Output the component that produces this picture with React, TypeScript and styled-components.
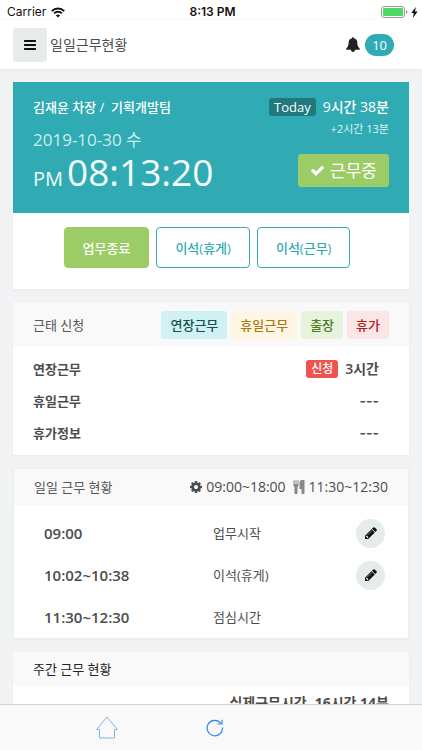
import React from "react";
import styled, { createGlobalStyle } from "styled-components";

const teal = "#30abb3";
const green = "#9ccc65";

const GlobalStyle = createGlobalStyle`
  *, *::before, *::after { box-sizing: border-box; }
  body {
    margin: 0;
    background: #f1f3f5;
    color: #4d4d4d;
    font-family: "Open Sans", "Noto Sans CJK KR", sans-serif;
    font-size: 13px;
    line-height: 20px;
  }
  button { font: inherit; cursor: pointer; margin: 0; }
  h1, h2, p, dl, dd, dt { margin: 0; font-size: inherit; font-weight: inherit; }
`;

const Screen = styled.div`
  display: flex;
  flex-direction: column;
  height: 100vh;
`;

const StatusBar = styled.div`
  display: grid;
  grid-template-columns: 1fr auto 1fr;
  align-items: center;
  flex: none;
  height: 20px;
  padding: 2px 4px 0 7px;
  background: #fff;
  color: #111;
  font-family: Inter, "Liberation Sans", sans-serif;
  font-size: 12px;
`;

const StatusGroup = styled.div<{ $end?: boolean }>`
  display: flex;
  align-items: center;
  justify-content: ${(p) => (p.$end ? "flex-end" : "flex-start")};
  gap: ${(p) => (p.$end ? 3 : 5)}px;
`;

const Clock = styled.span`
  font-weight: 600;
`;

const Header = styled.header`
  display: flex;
  align-items: center;
  flex: none;
  height: 49px;
  padding: 0 28px 0 13px;
  background: #fff;
  box-shadow: 0 1px 4px #e6e8eb;
`;

const MenuButton = styled.button`
  display: grid;
  place-items: center;
  width: 34px;
  height: 34px;
  padding: 0;
  border: 0;
  border-radius: 3px;
  background: #e6ebeb;
  color: #111;
`;

const Title = styled.h1`
  flex: 1;
  padding-left: 3px;
  font-size: 14px;
`;

const Alerts = styled.button`
  display: flex;
  align-items: center;
  gap: 4px;
  padding: 0;
  border: 0;
  background: none;
  color: #222;
`;

const Count = styled.span`
  padding: 0 7px;
  border-radius: 11px;
  background: ${teal};
  color: #fff;
  line-height: 22px;
`;

const Main = styled.main`
  display: flex;
  flex-direction: column;
  gap: 13px;
  flex: 1;
  min-height: 0;
  overflow-y: auto;
  scrollbar-width: none;
  padding: 13px;
`;

const Card = styled.section<{ $outlined?: boolean }>`
  flex: none;
  background: #fff;
  border: ${(p) => (p.$outlined ? "1px solid #eceef0" : "0")};
  box-shadow: 0 1px 2px #e9ebee;
`;

const CardHead = styled.div<{ $height: number }>`
  display: flex;
  align-items: center;
  justify-content: space-between;
  height: ${(p) => p.$height}px;
  padding: 0 20px;
  background: #f9f9f9;
`;

const CardTitle = styled.h2<{ $dark?: boolean }>`
  color: ${(p) => (p.$dark ? "#222" : "#555")};
`;

const Hero = styled.div`
  display: flex;
  justify-content: space-between;
  padding: 15px 20px 21px;
  background: ${teal};
  color: #fff;
`;

const HeroLeft = styled.div`
  display: flex;
  flex-direction: column;
`;

const HeroRight = styled.div`
  display: flex;
  flex-direction: column;
  align-items: flex-end;
`;

const Person = styled.p`
  font-weight: 500;
  white-space: pre;
`;

const DateLine = styled.p`
  margin-top: 11px;
  color: #c8eeef;
  font-size: 17px;
  line-height: 24px;
`;

const TimeLine = styled.p`
  display: flex;
  align-items: baseline;
  gap: 4px;
  color: #f3fcfc;
  font-size: 37px;
  line-height: 40px;
`;

const Meridiem = styled.span`
  font-size: 20px;
  line-height: 20px;
`;

const TodayLine = styled.p`
  display: flex;
  align-items: center;
  gap: 7px;
  font-size: 14px;
  font-weight: 500;
`;

const Badge = styled.span<{ $alert?: boolean }>`
  padding: 0 5px;
  border-radius: 3px;
  background: ${(p) => (p.$alert ? "#ef5350" : "#21787d")};
  color: #fff;
  font-size: ${(p) => (p.$alert ? 12 : 13)}px;
  font-weight: 500;
  line-height: 18px;
`;

const Extra = styled.p`
  margin-top: 2px;
  color: #dff5f5;
  font-size: 11px;
`;

const Working = styled.button`
  display: flex;
  align-items: center;
  gap: 5px;
  height: 33px;
  margin-top: 15px;
  padding: 0 12px;
  border: 0;
  border-radius: 3px;
  background: ${green};
  color: #fff;
  font-size: 17px;
`;

const Actions = styled.div`
  display: flex;
  justify-content: center;
  gap: 7px;
  padding: 14px 16px 21px 8px;
`;

const ActionButton = styled.button<{ $filled?: boolean }>`
  height: 41px;
  padding: 0 18px;
  border: 1px solid ${(p) => (p.$filled ? green : teal)};
  border-radius: 4px;
  background: ${(p) => (p.$filled ? green : "#fff")};
  color: ${(p) => (p.$filled ? "#fff" : teal)};
  font-weight: 500;
`;

const Tags = styled.div`
  display: flex;
  gap: 4px;
`;

const Tag = styled.button<{ $bg: string; $fg: string }>`
  height: 28px;
  padding: 0 9px;
  border: 0;
  border-radius: 3px;
  background: ${(p) => p.$bg};
  color: ${(p) => p.$fg};
  font-weight: 500;
`;

const Requests = styled.dl`
  display: flex;
  flex-direction: column;
  gap: 12px;
  padding: 12px 30px 12px 20px;
`;

const RequestRow = styled.div`
  display: flex;
  align-items: center;
  justify-content: space-between;
  font-weight: 700;
`;

const RequestValue = styled.dd`
  display: flex;
  align-items: center;
  gap: 7px;
  font-size: 14px;
  font-weight: 600;
`;

const Blank = styled.span`
  font-family: Inter, sans-serif;
`;

const Hours = styled.div`
  display: flex;
  align-items: center;
  gap: 6px;
  font-size: 14px;
`;

const HoursItem = styled.span`
  display: flex;
  align-items: center;
  gap: 3px;
`;

const LogTable = styled.table`
  width: 100%;
  margin-top: 7px;
  border-collapse: collapse;

  th, td { height: 42px; padding: 0; text-align: left; }
  th { width: 50%; padding-left: 30px; font-size: 15px; font-weight: 600; }
  td:nth-child(2) { padding-left: 2px; }
  td:last-child { width: 52px; }
`;

const EditButton = styled.button`
  display: grid;
  place-items: center;
  width: 29px;
  height: 29px;
  padding: 0;
  border: 0;
  border-radius: 50%;
  background: #e6ebeb;
  color: #111;
`;

const WeekTotal = styled.p`
  display: flex;
  justify-content: flex-end;
  gap: 8px;
  padding: 7px 20px;
  font-size: 14px;
  font-weight: 700;
`;

const TabBar = styled.nav`
  display: flex;
  justify-content: center;
  align-items: center;
  gap: 88px;
  flex: none;
  height: 46px;
  padding-right: 102px;
  border-top: 1px solid #d4d5d7;
  background: #f9f9f9;
`;

const TabButton = styled.button`
  display: grid;
  padding: 0;
  border: 0;
  background: none;
`;

const glyphs = {
  bars: "M1664 1344v128q0 26-19 45t-45 19h-1408q-26 0-45-19t-19-45v-128q0-26 19-45t45-19h1408q26 0 45 19t19 45zm0-512v128q0 26-19 45t-45 19h-1408q-26 0-45-19t-19-45v-128q0-26 19-45t45-19h1408q26 0 45 19t19 45zm0-512v128q0 26-19 45t-45 19h-1408q-26 0-45-19t-19-45v-128q0-26 19-45t45-19h1408q26 0 45 19t19 45z",
  bell: "M1664 1408q0 52-38 90t-90 38h-448q0 106-75 181t-181 75-181-75-75-181h-448q-52 0-90-38t-38-90q50-42 91-88t85-119.5 74.5-158.5 50-206 19.5-260q0-152 117-282.5t307-158.5q-8-19-8-39 0-40 28-68t68-28 68 28 28 68q0 20-8 39 190 28 307 158.5t117 282.5q0 139 19.5 260t50 206 74.5 158.5 85 119.5 91 88z",
  check: "M1671 566q0 40-28 68l-724 724-136 136q-28 28-68 28t-68-28l-136-136-362-362q-28-28-28-68t28-68l136-136q28-28 68-28t68 28l294 295 656-657q28-28 68-28t68 28l136 136q28 28 28 68z",
  cog: "M1152 896q0-106-75-181t-181-75-181 75-75 181 75 181 181 75 181-75 75-181zm512-109v222q0 12-8 23t-20 13l-185 28q-19 54-39 91 35 50 107 138 10 12 10 25t-9 23q-27 37-99 108t-94 71q-12 0-26-9l-138-108q-44 23-91 38-16 136-29 186-7 28-36 28h-222q-14 0-24.5-8.5t-11.5-21.5l-28-184q-49-16-90-37l-141 107q-10 9-25 9-14 0-25-11-126-114-165-168-7-10-7-23 0-12 8-23 15-21 51-66.5t54-70.5q-27-50-41-99l-183-27q-13-2-21-12.5t-8-23.5v-222q0-12 8-23t19-13l186-28q14-46 39-92-40-57-107-138-10-12-10-24 0-10 9-23 26-36 98.5-107.5t94.5-71.5q13 0 26 10l138 107q44-23 91-38 16-136 29-186 7-28 36-28h222q14 0 24.5 8.5t11.5 21.5l28 184q49 16 90 37l142-107q9-9 24-9 13 0 25 10 129 119 165 170 7 8 7 22 0 12-8 23-15 21-51 66.5t-54 70.5q26 50 41 98l183 28q13 2 21 12.5t8 23.5z",
  cutlery: "M832 64v640q0 61-35.5 111t-92.5 70v779q0 52-38 90t-90 38h-128q-52 0-90-38t-38-90v-779q-57-20-92.5-70t-35.5-111v-640q0-26 19-45t45-19 45 19 19 45v416q0 26 19 45t45 19 45-19 19-45v-416q0-26 19-45t45-19 45 19 19 45v416q0 26 19 45t45 19 45-19 19-45v-416q0-26 19-45t45-19 45 19 19 45zm768 0v1600q0 52-38 90t-90 38h-128q-52 0-90-38t-38-90v-512h-224q-13 0-22.5-9.5t-9.5-22.5v-800q0-132 94-226t226-94h256q26 0 45 19t19 45z",
  pencil: "M491 1536l91-91-235-235-91 91v107h128v128h107zm523-928q0-22-22-22-10 0-17 7l-542 542q-7 7-7 17 0 22 22 22 10 0 17-7l542-542q7-7 7-17zm-54-192l416 416-832 832h-416v-416zm683 96q0 53-37 90l-166 166-416-416 166-165q36-38 90-38 53 0 91 38l235 234q37 39 37 91z",
};

function Glyph({ name, size, color = "currentColor" }: { name: keyof typeof glyphs; size: number; color?: string }) {
  return (
    <svg width={size} height={size} viewBox="0 0 1792 1792" fill={color} aria-hidden="true">
      <path d={glyphs[name]} />
    </svg>
  );
}

const WifiIcon = () => (
  <svg width="14" height="11" viewBox="0 0 14 11" fill="none" stroke="#111" strokeWidth="2" aria-label="Wi-Fi">
    <path d="M.8 4.1a8.8 8.8 0 0 1 12.4 0M3.1 6.4a5.5 5.5 0 0 1 7.8 0" />
    <path d="M7 10.6 4.9 8.5a3 3 0 0 1 4.2 0Z" fill="#111" stroke="none" />
  </svg>
);

const BatteryIcon = () => (
  <svg width="27" height="12" viewBox="0 0 27 12" aria-label="Battery">
    <rect x=".5" y=".5" width="23" height="11" rx="2.5" fill="#fff" stroke="#999" />
    <rect x="2" y="2" width="20" height="8" rx="1" fill="#4cd964" />
    <path d="M25 4v4q1.5-.6 1.5-2t-1.5-2Z" fill="#999" />
  </svg>
);

const BoltIcon = () => (
  <svg width="7" height="11" viewBox="0 0 7 11" aria-label="Charging">
    <path d="M4.8 0 .3 6h2.5L1.8 11 6.7 4.5H4Z" fill="#111" />
  </svg>
);

const HomeIcon = () => (
  <svg width="22" height="23" viewBox="0 0 22 23" fill="none" stroke="#7db4ee" aria-hidden="true">
    <path d="M11 1 .7 13.5H3.5v8.5h15v-8.5h2.8Z" />
  </svg>
);

const ReloadIcon = () => (
  <svg width="18" height="18" viewBox="0 0 18 18" fill="none" stroke="#2f86ea" strokeWidth="1.2" aria-hidden="true">
    <path d="M16.5 8.5A7.7 7.7 0 1 1 14.8 4.2" />
    <path d="M11.5 5H16V.8" />
  </svg>
);

const tags = [
  { label: "연장근무", bg: "#d1f2f3", fg: "#174f52" },
  { label: "휴일근무", bg: "#fff7e3", fg: "#a87b16" },
  { label: "출장", bg: "#e7f3dc", fg: "#4f7a28" },
  { label: "휴가", bg: "#fbe5e6", fg: "#b01c1c" },
];

const requests = [
  { label: "연장근무", value: "3시간" },
  { label: "휴일근무" },
  { label: "휴가정보" },
];

const log = [
  { time: "09:00", label: "업무시작", editable: true },
  { time: "10:02~10:38", label: "이석(휴게)", editable: true },
  { time: "11:30~12:30", label: "점심시간", editable: false },
];

export default function App() {
  return (
    <Screen>
      <GlobalStyle />
      <StatusBar>
        <StatusGroup>Carrier<WifiIcon /></StatusGroup>
        <Clock>8:13 PM</Clock>
        <StatusGroup $end><BatteryIcon /><BoltIcon /></StatusGroup>
      </StatusBar>
      <Header>
        <MenuButton aria-label="메뉴"><Glyph name="bars" size={14} /></MenuButton>
        <Title>일일근무현황</Title>
        <Alerts aria-label="알림 10">
          <Glyph name="bell" size={15} />
          <Count>10</Count>
        </Alerts>
      </Header>
      <Main>
        <Card>
          <Hero>
            <HeroLeft>
              <Person>{"김재윤 차장 /  기획개발팀"}</Person>
              <DateLine>2019-10-30 수</DateLine>
              <TimeLine><Meridiem>PM</Meridiem>08:13:20</TimeLine>
            </HeroLeft>
            <HeroRight>
              <TodayLine><Badge>Today</Badge>9시간 38분</TodayLine>
              <Extra>+2시간 13분</Extra>
              <Working><Glyph name="check" size={15} />근무중</Working>
            </HeroRight>
          </Hero>
          <Actions>
            <ActionButton $filled>업무종료</ActionButton>
            <ActionButton>이석(휴게)</ActionButton>
            <ActionButton>이석(근무)</ActionButton>
          </Actions>
        </Card>

        <Card>
          <CardHead $height={45}>
            <CardTitle>근태 신청</CardTitle>
            <Tags>
              {tags.map((t) => (
                <Tag key={t.label} $bg={t.bg} $fg={t.fg}>{t.label}</Tag>
              ))}
            </Tags>
          </CardHead>
          <Requests>
            {requests.map((r) => (
              <RequestRow key={r.label}>
                <dt>{r.label}</dt>
                <RequestValue>
                  {r.value ? <><Badge $alert>신청</Badge>{r.value}</> : <Blank>---</Blank>}
                </RequestValue>
              </RequestRow>
            ))}
          </Requests>
        </Card>

        <Card $outlined>
          <CardHead $height={36}>
            <CardTitle>일일 근무 현황</CardTitle>
            <Hours>
              <HoursItem><Glyph name="cog" size={14} />09:00~18:00</HoursItem>
              <HoursItem><Glyph name="cutlery" size={14} color="#888" />11:30~12:30</HoursItem>
            </Hours>
          </CardHead>
          <LogTable>
            <tbody>
              {log.map((e) => (
                <tr key={e.time}>
                  <th scope="row">{e.time}</th>
                  <td>{e.label}</td>
                  <td>
                    {e.editable && (
                      <EditButton aria-label={`${e.label} 수정`}><Glyph name="pencil" size={14} /></EditButton>
                    )}
                  </td>
                </tr>
              ))}
            </tbody>
          </LogTable>
        </Card>

        <Card>
          <CardHead $height={34}>
            <CardTitle $dark>주간 근무 현황</CardTitle>
          </CardHead>
          <WeekTotal><span>실제근무시간</span><span>16시간 14분</span></WeekTotal>
        </Card>
      </Main>
      <TabBar>
        <TabButton aria-label="홈"><HomeIcon /></TabButton>
        <TabButton aria-label="새로고침"><ReloadIcon /></TabButton>
      </TabBar>
    </Screen>
  );
}
